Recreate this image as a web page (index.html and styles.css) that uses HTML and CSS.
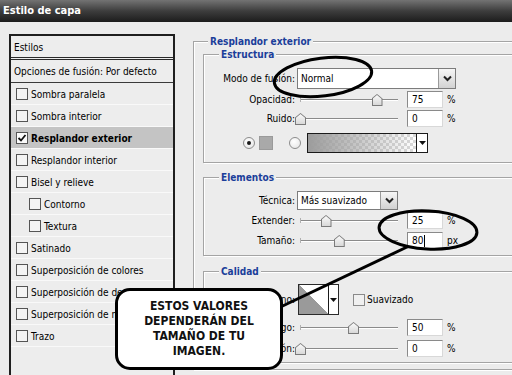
FILE: index.html
```html
<!DOCTYPE html>
<html lang="es">
<head>
<meta charset="utf-8">
<title>Estilo de capa</title>
<link rel="stylesheet" href="styles.css">
</head>
<body>
<header class="titlebar">Estilo de capa</header>
<main class="content">
  <aside class="styles-list">
    <div class="list-head">Estilos</div>
    <div class="list-blend">Opciones de fusión: Por defecto</div>
    <ul class="effects">
      <li><span class="cb"></span>Sombra paralela</li>
      <li><span class="cb"></span>Sombra interior</li>
      <li class="active"><span class="cb"><svg viewBox="0 0 10 10" width="10" height="10"><path d="M1.5 5 L4 7.5 L8.5 2" fill="none" stroke="#111" stroke-width="1.8"/></svg></span>Resplandor exterior</li>
      <li><span class="cb"></span>Resplandor interior</li>
      <li><span class="cb"></span>Bisel y relieve</li>
      <li class="sub"><span class="cb"></span>Contorno</li>
      <li class="sub"><span class="cb"></span>Textura</li>
      <li><span class="cb"></span>Satinado</li>
      <li><span class="cb"></span>Superposición de colores</li>
      <li><span class="cb"></span>Superposición de degradado</li>
      <li><span class="cb"></span>Superposición de motivo</li>
      <li><span class="cb"></span>Trazo</li>
    </ul>
  </aside>

  <section class="settings">
    <fieldset class="group outer">
      <legend>Resplandor exterior</legend>

      <fieldset class="group estructura">
        <legend>Estructura</legend>
        <div class="row h21">
          <span class="lbl">Modo de fusión:</span>
          <div class="select blend"><span class="val">Normal</span><span class="arrow"><svg viewBox="0 0 9 7" width="9" height="7"><path d="M1 1.5 L4.5 5 L8 1.5" fill="none" stroke="#222" stroke-width="2"/></svg></span></div>
        </div>
        <div class="row h17 mt2">
          <span class="lbl">Opacidad:</span>
          <div class="slider"><span class="thumb" style="left:75%"></span></div>
          <span class="num">75</span><span class="unit">%</span>
        </div>
        <div class="row h17 mt2">
          <span class="lbl">Ruido:</span>
          <div class="slider"><span class="thumb" style="left:0%"></span></div>
          <span class="num">0</span><span class="unit">%</span>
        </div>
        <div class="row h20 mt6 colors">
          <span class="radio on"></span>
          <span class="swatch"></span>
          <span class="radio second"></span>
          <div class="gradient"><span class="fill"></span><span class="drop"><svg viewBox="0 0 7 4" width="7" height="4"><path d="M0 0 H7 L3.5 4 Z" fill="#111"/></svg></span></div>
        </div>
      </fieldset>

      <fieldset class="group elementos">
        <legend>Elementos</legend>
        <div class="row h19">
          <span class="lbl">Técnica:</span>
          <div class="select tech"><span class="val">Más suavizado</span><span class="arrow"><svg viewBox="0 0 9 7" width="9" height="7"><path d="M1 1.5 L4.5 5 L8 1.5" fill="none" stroke="#222" stroke-width="2"/></svg></span></div>
        </div>
        <div class="row h17 mt2">
          <span class="lbl">Extender:</span>
          <div class="slider"><span class="thumb" style="left:25%"></span></div>
          <span class="num">25</span><span class="unit">%</span>
        </div>
        <div class="row h17 mt3">
          <span class="lbl">Tamaño:</span>
          <div class="slider"><span class="thumb" style="left:38%"></span></div>
          <span class="num">80<span class="caret"></span></span><span class="unit">px</span>
        </div>
      </fieldset>

      <fieldset class="group calidad">
        <legend>Calidad</legend>
        <div class="row h31">
          <span class="lbl">Contorno:</span>
          <div class="contour"><span class="curve"></span><span class="drop"><svg viewBox="0 0 7 4" width="7" height="4"><path d="M0 0 H7 L3.5 4 Z" fill="#111"/></svg></span></div>
          <span class="cb smooth"></span><span class="smooth-lbl">Suavizado</span>
        </div>
        <div class="row h17 mt4">
          <span class="lbl">Rango:</span>
          <div class="slider"><span class="thumb" style="left:52%"></span></div>
          <span class="num">50</span><span class="unit">%</span>
        </div>
        <div class="row h17 mt4">
          <span class="lbl">Fluctuación:</span>
          <div class="slider"><span class="thumb" style="left:0%"></span></div>
          <span class="num">0</span><span class="unit">%</span>
        </div>
      </fieldset>
    </fieldset>
  </section>
</main>

<svg class="annot" viewBox="0 0 512 375" width="512" height="375">
  <ellipse cx="323" cy="77" rx="49" ry="19" transform="rotate(-7 323 77)" fill="none" stroke="#000" stroke-width="3"/>
  <ellipse cx="428" cy="230" rx="49" ry="19" transform="rotate(3 428 230)" fill="none" stroke="#000" stroke-width="3"/>
  <line x1="407" y1="247" x2="272" y2="311" stroke="#000" stroke-width="3"/>
</svg>
<div class="bubble">ESTOS VALORES<br>DEPENDERÁN DEL<br>TAMAÑO DE TU<br>IMAGEN.</div>
</body>
</html>
```
FILE: styles.css
```css
* { box-sizing: border-box; }
html, body { margin: 0; padding: 0; }
body {
  width: 512px;
  height: 375px;
  overflow: hidden;
  position: relative;
  background: #ececec;
  font-family: "DejaVu Sans Condensed", "DejaVu Sans", sans-serif;
  font-size: 10px;
  color: #000;
}

.titlebar {
  height: 22px;
  line-height: 21px;
  padding-left: 3px;
  background: linear-gradient(#737373, #3d3d3d 50%, #1c1c1c);
  color: #fff;
  font-family: "DejaVu Sans Condensed", "DejaVu Sans", sans-serif;
  font-weight: bold;
  font-size: 11px;
}

.content {
  display: flex;
  gap: 18px;
  padding: 12px 0 0 9px;
}

/* ---------- left list ---------- */
.styles-list {
  flex: none;
  width: 166px;
  height: 400px;
  border: 2px solid #1f1f1f;
  background: #ededed;
}
.list-head {
  height: 24px;
  line-height: 24px;
  padding-left: 3px;
  border-bottom: 3px double #2a2a2a;
}
.list-blend {
  height: 23px;
  line-height: 23px;
  padding-left: 3px;
  border-bottom: 1px solid #3a3a3a;
}
.effects {
  list-style: none;
  margin: 0;
  padding: 0;
}
.effects li {
  height: 22px;
  display: flex;
  align-items: center;
  gap: 3px;
  padding-left: 5px;
  padding-top: 1px;
  border-bottom: 1px solid #f9f9f9;
  white-space: nowrap;
}
.effects li.sub { padding-left: 18px; }
.effects li.active {
  background: #c4c4c4;
  font-weight: bold;
}
.cb {
  flex: none;
  width: 12px;
  height: 12px;
  border: 1px solid #555;
  background: #f4f4f4;
  display: flex;
  align-items: center;
  justify-content: center;
}
.active .cb { background: #fafafa; }

/* ---------- right groups ---------- */
.settings {
  flex: none;
  width: 327px;
  margin-top: 1px;
}
.group {
  margin: 0;
  min-width: 0;
  border: 1px solid #a4a4a4;
  box-shadow: inset 1px 1px 0 #fff, 1px 1px 0 #fff;
}
.group > legend {
  margin-left: 5px;
  padding: 0 2px;
  line-height: 13px;
  font-weight: bold;
  color: #1b3e9a;
  background: #ececec;
}
.outer { padding: 0 0 6px 9px; }
.estructura { padding: 7px 0 9px 10px; }
.elementos { margin-top: 8px; padding: 7px 0 6px 10px; }
.calidad { margin-top: 9px; padding: 6px 0 5px 10px; }

.row {
  display: flex;
  align-items: center;
}
.h17 { height: 17px; }
.h19 { height: 19px; }
.h20 { height: 20px; }
.h21 { height: 21px; }
.h31 { height: 31px; }
.mt2 { margin-top: 2px; }
.mt3 { margin-top: 3px; }
.mt4 { margin-top: 4px; }
.mt6 { margin-top: 6px; }

.lbl {
  flex: none;
  width: 81px;
  text-align: right;
  white-space: nowrap;
  margin-right: 2px;
}

.select {
  height: 100%;
  display: flex;
  align-items: center;
  background: #fff;
  border: 1px solid #7c7c7c;
  padding-left: 3px;
}
.select.blend { width: 159px; }
.select.tech { width: 101px; }
.select .arrow {
  margin-left: auto;
  width: 17px;
  height: 100%;
  display: flex;
  align-items: center;
  justify-content: center;
  border-left: 1px solid #9a9a9a;
  background: linear-gradient(#f6f6f6, #d2d2d2);
}

.slider {
  position: relative;
  flex: none;
  width: 102px;
  height: 100%;
  margin-left: 1px;
}
.slider::before {
  content: "";
  position: absolute;
  left: 2px;
  right: 2px;
  top: 8px;
  height: 1px;
  background: #8a8a8a;
  box-shadow: 0 1px 0 #fff;
}
.slider::after {
  content: "";
  position: absolute;
  left: 2px;
  top: 6px;
  width: 1px;
  height: 5px;
  background: #b0b0b0;
}
.thumb {
  position: absolute;
  top: 3px;
  width: 11px;
  height: 12px;
  margin-left: -3px;
  z-index: 1;
  background: #7a7a7a;
  clip-path: polygon(50% 0, 100% 38%, 100% 100%, 0 100%, 0 38%);
}
.thumb::before {
  content: "";
  position: absolute;
  inset: 1px;
  background: linear-gradient(#fafafa, #d8d8d8);
  clip-path: polygon(50% 0, 100% 38%, 100% 100%, 0 100%, 0 38%);
}

.num {
  flex: none;
  width: 36px;
  height: 100%;
  margin-left: 7px;
  padding-left: 4px;
  display: flex;
  align-items: center;
  background: #fff;
  border: 1px solid #8a8a8a;
  border-right-color: #d8d8d8;
  border-bottom-color: #d8d8d8;
}
.caret {
  display: inline-block;
  width: 1px;
  height: 12px;
  margin-left: 1px;
  background: #000;
}
.unit { margin-left: 4px; }

.colors { padding-left: 29px; }
.radio {
  flex: none;
  width: 12px;
  height: 12px;
  border-radius: 50%;
  border: 1px solid #8c8c8c;
  background: radial-gradient(circle at 40% 35%, #fff, #e2e2e2);
  display: flex;
  align-items: center;
  justify-content: center;
}
.radio.on::after {
  content: "";
  width: 4px;
  height: 4px;
  border-radius: 50%;
  background: #1a1a1a;
}
.swatch {
  flex: none;
  width: 14px;
  height: 14px;
  margin-left: 4px;
  background: #a9a9a9;
  border: 1px solid #9a9a9a;
}
.radio.second { margin-left: 16px; }
.gradient {
  flex: none;
  width: 121px;
  height: 20px;
  margin-left: 6px;
  display: flex;
  border: 1px solid #1a1a1a;
  background: #fff;
}
.gradient .fill {
  flex: 1;
  background:
    linear-gradient(90deg, #9c9c9c 0%, rgba(160,160,160,0.6) 45%, rgba(200,200,200,0) 100%),
    repeating-conic-gradient(#d9d9d9 0 25%, #fff 0 50%) 0 0 / 6px 6px;
}
.gradient .drop, .contour .drop {
  flex: none;
  width: 11px;
  display: flex;
  align-items: center;
  justify-content: center;
  border-left: 1px solid #1a1a1a;
  background: #fff;
}
.contour {
  flex: none;
  width: 41px;
  height: 31px;
  margin-left: 1px;
  display: flex;
  border: 1px solid #2a2a2a;
  background: #fff;
}
.contour .curve {
  flex: 1;
  background: linear-gradient(to top right, #9a9a9a 50%, #fff 50.5%);
}
.contour .drop { width: 10px; }
.cb.smooth {
  margin-left: 14px;
  background: #f0f0f0;
  border-color: #8a8a8a;
}
.smooth-lbl { margin-left: 2px; }

/* ---------- annotations ---------- */
.annot {
  position: absolute;
  left: 0;
  top: 0;
  z-index: 5;
  pointer-events: none;
}
.bubble {
  position: absolute;
  left: 115px;
  top: 288px;
  width: 168px;
  height: 82px;
  z-index: 6;
  border: 3px solid #000;
  border-radius: 15px;
  background: #fff;
  display: flex;
  align-items: center;
  justify-content: center;
  text-align: center;
  font-family: "DejaVu Sans Condensed", "DejaVu Sans", sans-serif;
  font-weight: bold;
  font-size: 12px;
  line-height: 15px;
  color: #111;
}
```
